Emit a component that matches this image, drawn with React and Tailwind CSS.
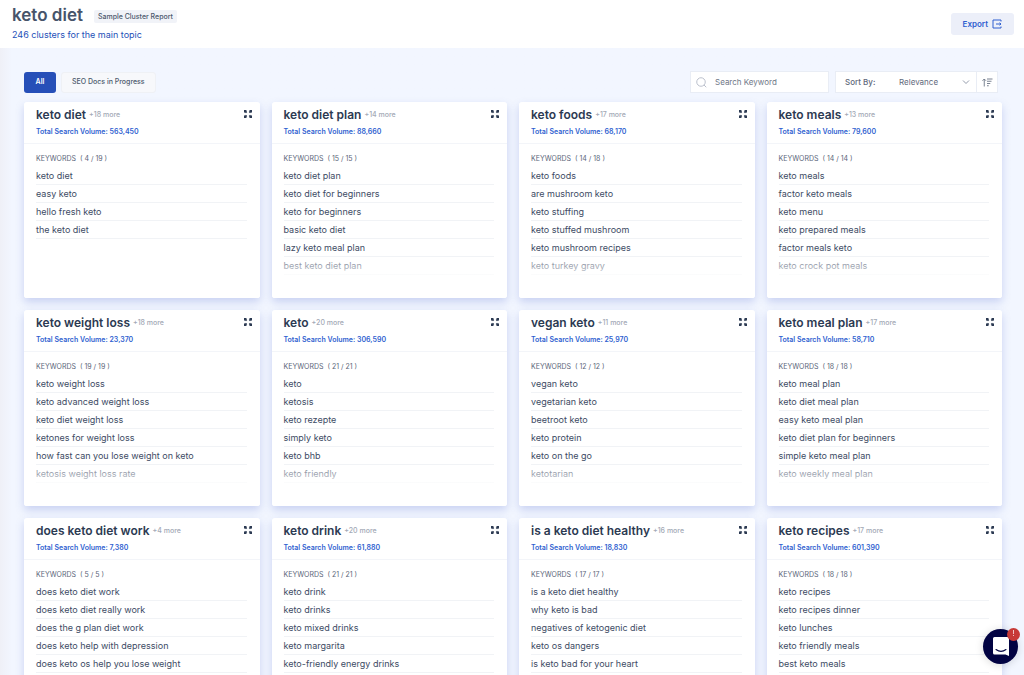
import { useState } from 'react';

const clusters = [
  { title: 'keto diet', more: 18, volume: '563,450', count: '4 / 19', keywords: ['keto diet', 'easy keto', 'hello fresh keto', 'the keto diet'] },
  { title: 'keto diet plan', more: 14, volume: '88,660', count: '15 / 15', keywords: ['keto diet plan', 'keto diet for beginners', 'keto for beginners', 'basic keto diet', 'lazy keto meal plan', 'best keto diet plan'] },
  { title: 'keto foods', more: 17, volume: '68,170', count: '14 / 18', keywords: ['keto foods', 'are mushroom keto', 'keto stuffing', 'keto stuffed mushroom', 'keto mushroom recipes', 'keto turkey gravy'] },
  { title: 'keto meals', more: 13, volume: '79,600', count: '14 / 14', keywords: ['keto meals', 'factor keto meals', 'keto menu', 'keto prepared meals', 'factor meals keto', 'keto crock pot meals'] },
  { title: 'keto weight loss', more: 18, volume: '23,370', count: '19 / 19', keywords: ['keto weight loss', 'keto advanced weight loss', 'keto diet weight loss', 'ketones for weight loss', 'how fast can you lose weight on keto', 'ketosis weight loss rate'] },
  { title: 'keto', more: 20, volume: '306,590', count: '21 / 21', keywords: ['keto', 'ketosis', 'keto rezepte', 'simply keto', 'keto bhb', 'keto friendly'] },
  { title: 'vegan keto', more: 11, volume: '25,970', count: '12 / 12', keywords: ['vegan keto', 'vegetarian keto', 'beetroot keto', 'keto protein', 'keto on the go', 'ketotarian'] },
  { title: 'keto meal plan', more: 17, volume: '58,710', count: '18 / 18', keywords: ['keto meal plan', 'keto diet meal plan', 'easy keto meal plan', 'keto diet plan for beginners', 'simple keto meal plan', 'keto weekly meal plan'] },
  { title: 'does keto diet work', more: 4, volume: '7,380', count: '5 / 5', keywords: ['does keto diet work', 'does keto diet really work', 'does the g plan diet work', 'does keto help with depression', 'does keto os help you lose weight'] },
  { title: 'keto drink', more: 20, volume: '61,880', count: '21 / 21', keywords: ['keto drink', 'keto drinks', 'keto mixed drinks', 'keto margarita', 'keto-friendly energy drinks'] },
  { title: 'is a keto diet healthy', more: 16, volume: '18,830', count: '17 / 17', keywords: ['is a keto diet healthy', 'why keto is bad', 'negatives of ketogenic diet', 'keto os dangers', 'is keto bad for your heart'] },
  { title: 'keto recipes', more: 17, volume: '601,390', count: '18 / 18', keywords: ['keto recipes', 'keto recipes dinner', 'keto lunches', 'keto friendly meals', 'best keto meals'] },
];

function ExpandIcon() {
  return (
    <svg className="w-2 h-2" viewBox="0 0 16 16" fill="#2c3a52">
      <path d="M0 0h6L4.300 1.700 6.500 4 4 6.500 1.700 4.300 0 6z" />
      <path d="M16 0v6l-1.700-1.700L12 6.500 9.500 4l2.200-2.300L10 0z" />
      <path d="M0 16v-6l1.700 1.700L4 9.500 6.500 12l-2.200 2.300L6 16z" />
      <path d="M16 16h-6l1.700-1.700L9.500 12 12 9.500l2.300 2.200L16 10z" />
    </svg>
  );
}

function ClusterCard({ cluster }) {
  return (
    <article className="relative h-[196px] overflow-hidden rounded-[3px] bg-white">
      <div className="flex items-start justify-between h-[42px] pt-1 pl-3 pr-2 border-b border-[#f3f5f9]">
        <div>
          <div className="flex items-center gap-[3px] h-[18px]">
            <h2 className="text-[12px] leading-[18px] font-semibold text-[#2c3a52]">{cluster.title}</h2>
            <span className="text-[7px] leading-4 font-medium text-[#a3a9b6]">+{cluster.more} more</span>
          </div>
          <p className="text-[7px] leading-4 font-semibold text-[#2f5fd0]">Total Search Volume: {cluster.volume}</p>
        </div>
        <button className="mt-1" aria-label={`Expand ${cluster.title}`}>
          <ExpandIcon />
        </button>
      </div>

      <div className="pl-3 pr-[13px] pt-2">
        <h3 className="text-[7px] leading-[14px] text-[#5b6679] whitespace-pre">KEYWORDS  ( {cluster.count} )</h3>
        <ul className="mt-px">
          {cluster.keywords.map((keyword) => (
            <li key={keyword} className="h-[18px] text-[9px] leading-[18px] text-[#3d4b64] border-b border-[#f1f3f6]">
              {keyword}
            </li>
          ))}
        </ul>
      </div>

      {/* Fade over the end of the list */}
      <div className="absolute inset-x-0 bottom-0 h-10 bg-linear-to-b from-white/30 via-white/80 to-white" />
    </article>
  );
}

export default function App() {
  const [tab, setTab] = useState('all');

  return (
    <div className="h-screen flex flex-col overflow-hidden bg-[#f2f6ff] font-['Inter',sans-serif]">
      <header className="flex items-center justify-between h-12 shrink-0 pl-3 pr-[10px] bg-white">
        <div className="pb-[2px]">
          <div className="flex items-center gap-[11px]">
            <h1 className="text-[17px] leading-6 font-semibold text-[#47546a]">keto diet</h1>
            <span className="mt-[2px] px-1 rounded-[2px] bg-[#f1f3f8] text-[7px] leading-[13px] font-medium text-[#4c586c]">Sample Cluster Report</span>
          </div>
          <p className="text-[9px] leading-4 text-[#2450b8]">246 clusters for the main topic</p>
        </div>
        <button className="flex items-center gap-1 h-[22px] px-3 rounded-[3px] bg-[#eceff9] text-[8px] font-semibold text-[#2f5fd0]">
          Export
          <svg className="w-[10px] h-[10px]" viewBox="0 0 20 20" fill="none" stroke="currentColor" strokeWidth="2">
            <path d="M18 5V2H2v16h16v-3" />
            <path d="M8 10h10M15 7.500l3 2.500-3 2.500" />
          </svg>
        </button>
      </header>

      <main className="flex-1 min-h-0 overflow-y-auto [scrollbar-width:none] bg-linear-to-r from-[#eff0f7] to-[#f2f6ff] to-[12px] pt-[23px] pl-6 pr-[22px]">
        {/* Tabs and filters */}
        <div className="flex items-center justify-between h-[22px]">
          <div className="flex gap-[5px] h-[21px]">
            <button onClick={() => setTab('all')} aria-pressed={tab === 'all'} className="w-8 rounded-[3px] bg-[#264fb8] text-[7px] font-semibold text-white">
              All
            </button>
            <button onClick={() => setTab('docs')} aria-pressed={tab === 'docs'} className="px-[10px] rounded-[3px] border border-[#eff1f5] bg-[#f7f8fb] text-[7px] font-medium text-[#4c586c]">
              SEO Docs in Progress
            </button>
          </div>

          <div className="flex gap-[6px] h-[22px] mr-1">
            <label className="flex items-center gap-2 w-[139px] px-[5px] border border-[#e9edf5] bg-white">
              <svg className="w-[11px] h-[11px] shrink-0" viewBox="0 0 22 22" fill="none" stroke="#b3b9c6" strokeWidth="1.8">
                <circle cx="10" cy="10" r="8.500" />
                <path d="M16 16l4.500 4.500" />
              </svg>
              <input type="text" aria-label="Search Keyword" placeholder="Search Keyword" className="w-full min-w-0 text-[8px] outline-none text-[#5b6679] placeholder:text-[#6f7888]" />
            </label>
            <div className="flex border border-[#e9edf5] bg-white text-[8px] text-[#5f697b]">
              <label htmlFor="sort" className="flex items-center pl-[9px] w-[63px] font-medium">Sort By:</label>
              <div className="relative flex items-center w-[77px]">
                <select id="sort" className="w-full h-full appearance-none outline-none bg-transparent">
                  <option>Relevance</option>
                  <option>Search Volume</option>
                </select>
                <svg className="absolute right-[6px] w-2 h-2 pointer-events-none" viewBox="0 0 16 16" fill="none" stroke="#8790a0" strokeWidth="1.800">
                  <path d="M2 5l6 6 6-6" />
                </svg>
              </div>
              <button aria-label="Sort direction" className="flex items-center justify-center w-[21px] border-l border-[#e9edf5]">
                <svg className="w-[11px] h-[9px]" viewBox="0 0 22 18" fill="none" stroke="#6b7586" strokeWidth="1.800">
                  <path d="M4.500 17V2M1 5.500L4.500 2 8 5.500M10 2h11M10 6.500h9M10 11h6.500M10 15.500h3.500" />
                </svg>
              </button>
            </div>
          </div>
        </div>

        {/* Cluster cards */}
        <div className="grid grid-cols-4 gap-3 mt-[9px] pb-6">
          {clusters.map((cluster) => (
            <div key={cluster.title} className="rounded-[3px] shadow-[0_4px_9px_rgba(80,105,205,0.25)]">
              <ClusterCard cluster={cluster} />
            </div>
          ))}
        </div>
      </main>

      {/* Chat launcher */}
      <button aria-label="Open chat" className="fixed right-[6px] bottom-[11px] flex items-center justify-center w-[35px] h-[35px] rounded-full bg-[#020342] shadow-[0_1px_8px_rgba(0,0,0,0.15)]">
        <svg className="w-4 h-[19px]" viewBox="0 0 32 38">
          <path d="M3 0h26a3 3 0 0 1 3 3v35l-7-3H3a3 3 0 0 1-3-3V3a3 3 0 0 1 3-3z" fill="#fff" />
          <path d="M6 25c6 4.500 14 4.500 20 0" fill="none" stroke="#020342" strokeWidth="2.200" strokeLinecap="round" />
        </svg>
        <span className="absolute -top-px -right-[2px] flex items-center justify-center w-[13px] h-[13px] rounded-full bg-[#c73a37] text-[7px] text-white">!</span>
      </button>
    </div>
  );
}
